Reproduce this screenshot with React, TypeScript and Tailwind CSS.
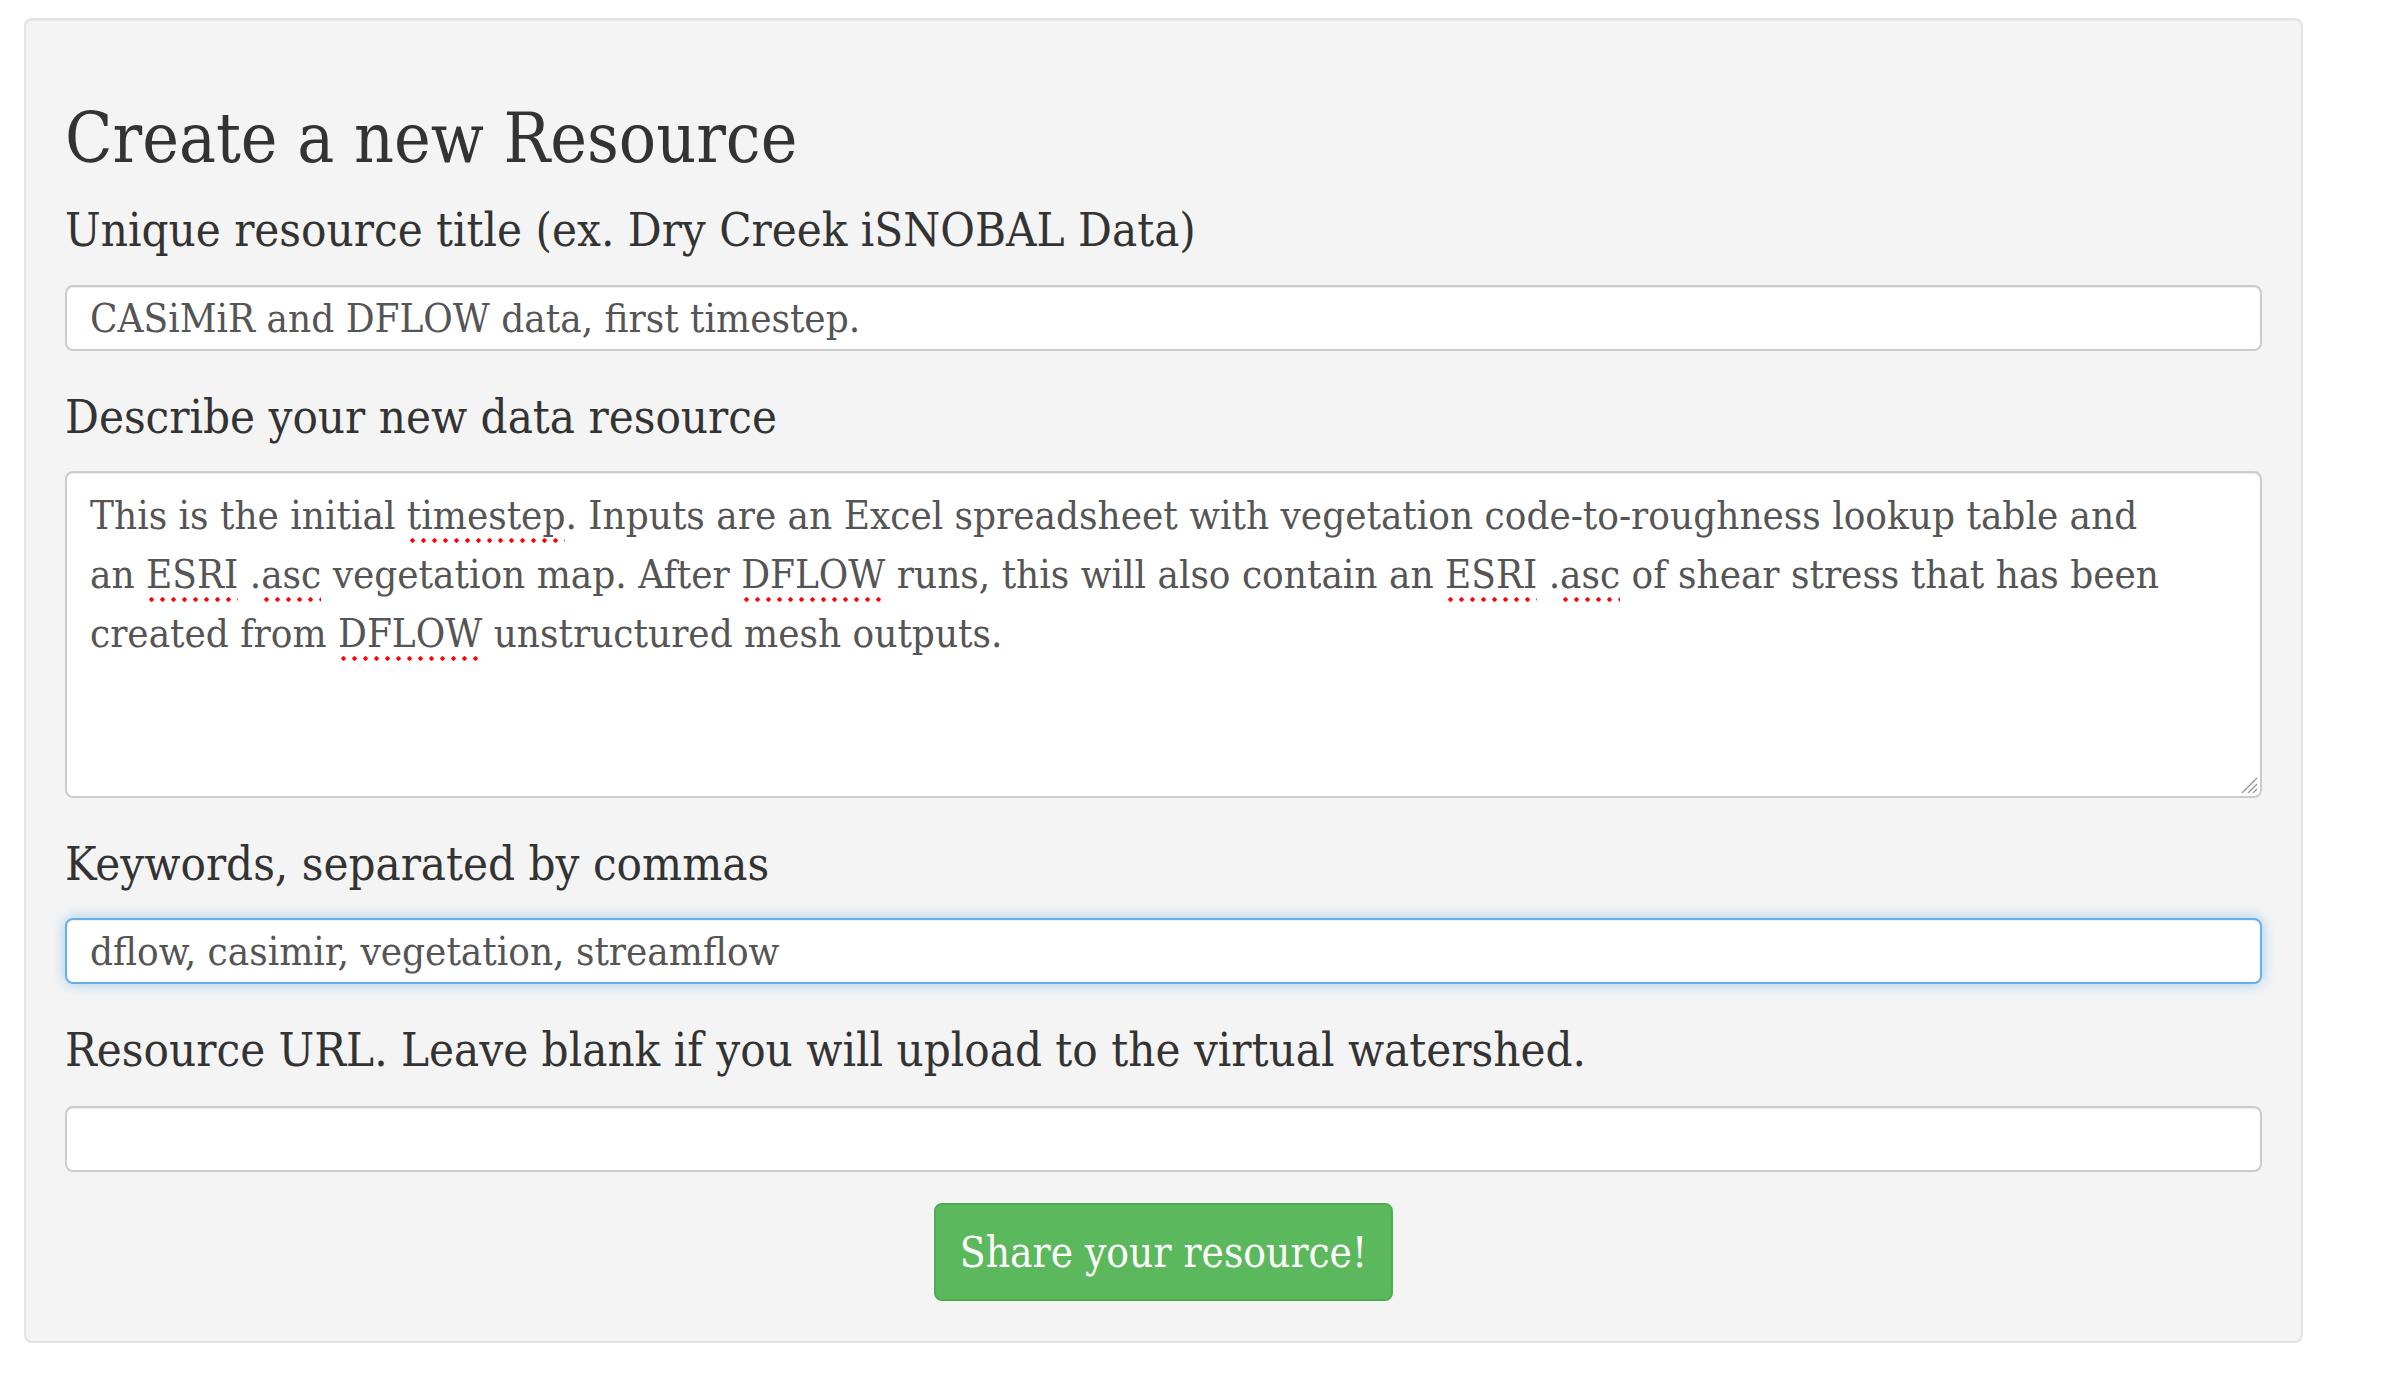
import React from 'react';

// Bootstrap-style "well" holding the new-resource form. Everything is
// rendered at roughly 2x, so sizes are written out as arbitrary values.

const slab = "font-['DejaVu_Serif_Condensed','DejaVu_Serif',serif] font-stretch-condensed";

const labelCls = `block text-[47px] leading-[56px] text-[#333333] ${slab}`;
const inputCls =
  'block w-full h-[66px] rounded-[8px] border-2 bg-white pl-[23px] pr-4 text-[40px] text-[#555555] outline-none';

// words that the browser flagged with the red dotted spellcheck line
function Flag({ children }: { children: React.ReactNode }) {
  return (
    <span className="pb-[7px] bg-[radial-gradient(circle,#ff0000_1.9px,transparent_2.4px)] bg-[length:11px_9px] bg-[position:left_bottom] bg-repeat-x">
      {children}
    </span>
  );
}

export default function App() {
  return (
    <div className={`min-h-screen bg-white pt-[18px] pl-[24px] ${slab}`}>
      <div className="w-[2279px] rounded-[8px] border-2 border-[#e3e3e3] bg-[#f4f4f4] px-[39px] pt-[78px] pb-[40px] shadow-[inset_0_1px_1px_rgba(0,0,0,0.05)]">
        <h1 className="text-[69px] leading-[80px] text-[#333333]">Create a new Resource</h1>

        <form className="mt-[24px]">
          <div>
            <label className={labelCls}>Unique resource title (ex. Dry Creek iSNOBAL Data)</label>
            <input
              readOnly
              value="CASiMiR and DFLOW data, first timestep."
              className={`${inputCls} mt-[27px] border-[#cccccc] shadow-[inset_0_1px_1px_rgba(0,0,0,0.075)]`}
            />
          </div>

          <div className="mt-[38px]">
            <label className={labelCls}>Describe your new data resource</label>
            <div className="relative mt-[26px] h-[327px] rounded-[8px] border-2 border-[#cccccc] bg-white pl-[23px] pt-[13px] text-[40px] leading-[59px] text-[#555555] shadow-[inset_0_1px_1px_rgba(0,0,0,0.075)]">
              <div className="whitespace-nowrap">
                This is the initial <Flag>timestep</Flag>. Inputs are an Excel spreadsheet with vegetation code-to-roughness lookup table and
              </div>
              <div className="whitespace-nowrap">
                an <Flag>ESRI</Flag> .<Flag>asc</Flag> vegetation map. After <Flag>DFLOW</Flag> runs, this will also contain an <Flag>ESRI</Flag> .<Flag>asc</Flag> of shear stress that has been
              </div>
              <div className="whitespace-nowrap">
                created from <Flag>DFLOW</Flag> unstructured mesh outputs.
              </div>
              {/* resize grip */}
              <svg className="absolute right-[2px] bottom-[2px]" width="20" height="20" viewBox="0 0 20 20">
                <line x1="4" y1="19" x2="19" y2="4" stroke="#9a9a9a" strokeWidth="1.5" />
                <line x1="10" y1="19" x2="19" y2="10" stroke="#9a9a9a" strokeWidth="1.5" />
                <line x1="15" y1="19" x2="19" y2="15" stroke="#9a9a9a" strokeWidth="1.5" />
              </svg>
            </div>
          </div>

          <div className="mt-[38px]">
            <label className={labelCls}>Keywords, separated by commas</label>
            <input
              readOnly
              value="dflow, casimir, vegetation, streamflow"
              className={`${inputCls} mt-[26px] border-[#66afe9] shadow-[inset_0_1px_1px_rgba(0,0,0,0.075),0_0_14px_rgba(102,175,233,0.6)]`}
            />
          </div>

          <div className="mt-[38px]">
            <label className={labelCls}>Resource URL. Leave blank if you will upload to the virtual watershed.</label>
            <input
              readOnly
              value=""
              className={`${inputCls} mt-[28px] border-[#cccccc] shadow-[inset_0_1px_1px_rgba(0,0,0,0.075)]`}
            />
          </div>

          <div className="mt-[31px] flex justify-center">
            <button
              type="button"
              className="h-[98px] w-[459px] rounded-[8px] border-2 border-[#4cae4c] bg-[#5cb85c] text-[42px] text-white font-['DejaVu_Serif',serif]"
            >
              Share your resource!
            </button>
          </div>
        </form>
      </div>
    </div>
  );
}
